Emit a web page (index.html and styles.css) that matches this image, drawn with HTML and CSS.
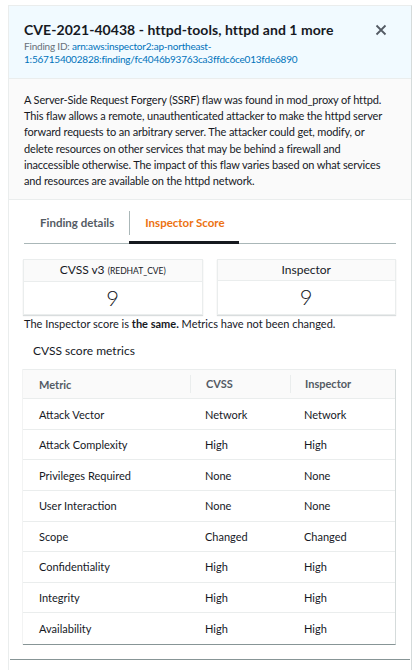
FILE: index.html
```html
<!DOCTYPE html>
<html>
<head>
<meta charset="utf-8">
<link rel="stylesheet" href="styles.css">
</head>
<body>
<div class="panel">
  <div class="header">
    <div class="title-row">
      <h1 class="title">CVE-2021-40438 - httpd-tools, httpd and 1 more</h1>
      <button class="close" aria-label="Close">
        <svg width="12" height="12" viewBox="0 0 12 12"><path d="M1.5 1.5 L10.5 10.5 M10.5 1.5 L1.5 10.5" stroke="#545b64" stroke-width="1.8" fill="none"/></svg>
      </button>
    </div>
    <div class="finding-id"><span class="label">Finding ID: </span><a class="link">arn:aws:inspector2:ap-northeast- <span class="nowrap">1:567154002828:finding/fc4046b93763ca3ffdc6ce013fde6890</span></a></div>
  </div>
  <div class="desc">A Server-Side Request Forgery (SSRF) flaw was found in mod_proxy of httpd. This flaw allows a remote, unauthenticated attacker to make the httpd server forward requests to an arbitrary server. The attacker could get, modify, or delete resources on other services that may be behind a firewall and inaccessible otherwise. The impact of this flaw varies based on what services and resources are available on the httpd network.</div>
  <div class="body">
    <div class="tabs">
      <div class="tab">Finding details</div>
      <div class="tab active">Inspector Score</div>
    </div>
    <div class="scores">
      <div class="score">
        <div class="score-head">CVSS v3 <span class="small">(REDHAT_CVE)</span></div>
        <div class="score-val">9</div>
      </div>
      <div class="score">
        <div class="score-head">Inspector</div>
        <div class="score-val">9</div>
      </div>
    </div>
    <p class="note">The Inspector score is <b>the same.</b> Metrics have not been changed.</p>
    <h2 class="metrics-title">CVSS score metrics</h2>
    <div class="table">
      <div class="row head">
        <div class="c1">Metric</div><div class="c2">CVSS</div><div class="c3">Inspector</div>
      </div>
      <div class="row"><div class="c1">Attack Vector</div><div class="c2">Network</div><div class="c3">Network</div></div>
      <div class="row"><div class="c1">Attack Complexity</div><div class="c2">High</div><div class="c3">High</div></div>
      <div class="row"><div class="c1">Privileges Required</div><div class="c2">None</div><div class="c3">None</div></div>
      <div class="row"><div class="c1">User Interaction</div><div class="c2">None</div><div class="c3">None</div></div>
      <div class="row"><div class="c1">Scope</div><div class="c2">Changed</div><div class="c3">Changed</div></div>
      <div class="row"><div class="c1">Confidentiality</div><div class="c2">High</div><div class="c3">High</div></div>
      <div class="row"><div class="c1">Integrity</div><div class="c2">High</div><div class="c3">High</div></div>
      <div class="row last"><div class="c1">Availability</div><div class="c2">High</div><div class="c3">High</div></div>
    </div>
  </div>
  <div class="footer-line"></div>
</div>
</body>
</html>
```
FILE: styles.css
```css
* { box-sizing: border-box; }
html, body { margin: 0; padding: 0; background: #fff; }
body {
  font-family: Lato, "Liberation Sans", sans-serif;
  color: #16191f;
  padding: 5px 6px 0 8px;
}
.panel {
  width: 404px;
  min-height: 665px;
  border-top: 1px solid #eaeded;
  border-left: 1px solid #eaeded;
  border-right: 1px solid #d5dbdb;
  display: flex;
  flex-direction: column;
}
.header {
  background: #f1faff;
  border-bottom: 1px solid #eaeded;
  padding: 15px 16px 12px 15px;
}
.title-row { display: flex; justify-content: space-between; align-items: center; }
.title {
  margin: 0;
  font-size: 14px;
  font-weight: 700;
  line-height: 18px;
  letter-spacing: 0.05px;
}
.close {
  border: 0; background: none; padding: 0; margin-right: 8px;
  width: 12px; height: 12px; display: flex;
}
.finding-id {
  margin-top: 1px;
  font-size: 10px;
  line-height: 13px;
  letter-spacing: -0.2px;
  width: 340px;
}
.nowrap { white-space: nowrap; }
.label { color: #687078; }
.link { color: #0073bb; word-spacing: 0; }
.desc {
  background: #fafafa;
  border-bottom: 1px solid #eaeded;
  padding: 13px 16.5px 10px 15px;
  font-size: 11px;
  letter-spacing: -0.15px;
  line-height: 16.2px;
}
.body { padding: 0 15px 0 15px; }
.tabs {
  display: flex;
  margin-top: 9px;
  border-bottom: 1px solid #aab7b8;
}
.tab {
  font-size: 11.5px;
  font-weight: 700;
  color: #545b64;
  padding: 6px 15px 12px 16px;
  line-height: 16px;
  position: relative;
}
.tab + .tab::before {
  content: "";
  position: absolute;
  left: 0; top: 2px; bottom: 9px;
  border-left: 1px solid #aab7b8;
}
.tab.active {
  color: #ec7211;
  padding-right: 14px;
  box-shadow: inset 0 -3px 0 #16191f;
  margin-bottom: -1px;
}
.scores {
  display: flex;
  gap: 14px;
  margin-top: 15px;
  margin-left: -1px;
}
.score {
  width: 180px;
  border: 1px solid #eaeded;
  box-shadow: 0 1px 1px rgba(0,28,36,0.15);
  text-align: center;
}
.score-head {
  background: #fafafa;
  border-bottom: 1px solid #eaeded;
  font-size: 12px;
  line-height: 20px;
}
.small { font-size: 8.5px; }
.score-val {
  font-size: 22px;
  font-weight: 300;
  line-height: 32px;
}
.note {
  margin: 2px 0 0 0;
  font-size: 11px;
  line-height: 14px;
}
.metrics-title {
  margin: 12px 0 0 9px;
  font-size: 12px;
  font-weight: 400;
  line-height: 16px;
}
.table {
  margin: 10px 0 0 -1px;
  border-top: 1px solid #eaeded;
  border-right: 1px solid #d5dbdb;
  border-bottom: 1px solid #879596;
  box-shadow: -1px 0 0 #f2f3f3;
}
.row {
  display: grid;
  grid-template-columns: 167px 100px 1fr;
  height: 30.6px;
  align-items: center;
  border-bottom: 1px solid #eaeded;
  font-size: 11px;
}
.row.last { border-bottom: 0; }
.row.head {
  background: #fafafa;
  color: #545b64;
  font-weight: 700;
  height: 29px;
}
.c1 { padding-left: 16px; }
.c2 { padding-left: 15px; }
.c3 { padding-left: 14px; }
.row.head .c2, .row.head .c3 { border-left: 1px solid #eaeded; line-height: 18px; }
.footer-line {
  margin: 14px 1px 0 1px;
  border-top: 1px solid #879596;
}
```
